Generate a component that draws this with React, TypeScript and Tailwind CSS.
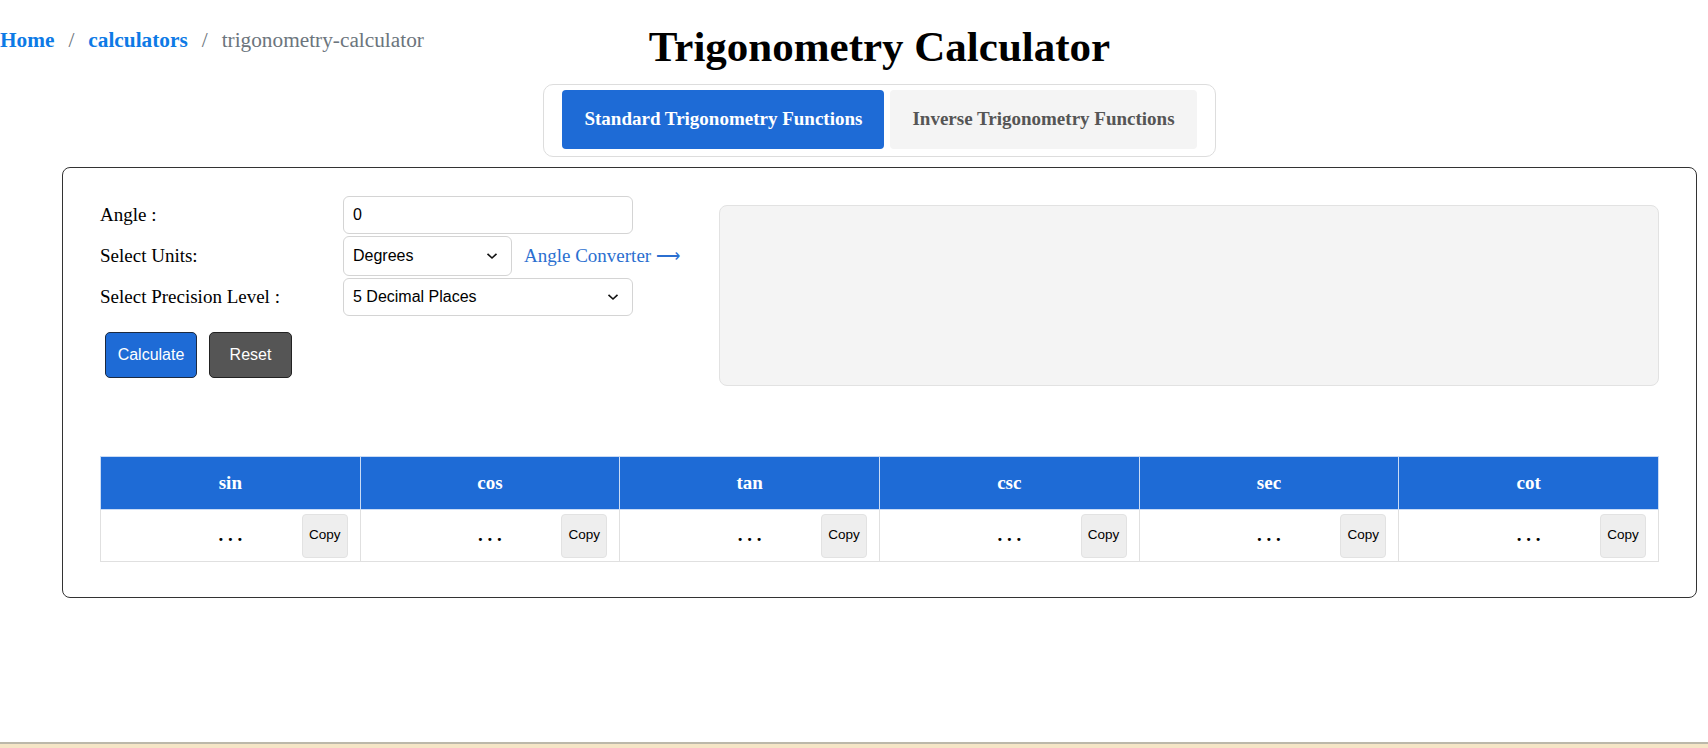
import { useState } from 'react';

const FUNCS = ['sin', 'cos', 'tan', 'csc', 'sec', 'cot'];

const serif = "font-['Liberation_Serif','Times_New_Roman',serif]";
const sans = "font-['Liberation_Sans',Arial,sans-serif]";

function Chevron() {
  return (
    <svg
      width="12"
      height="8"
      viewBox="0 0 12 8"
      className="pointer-events-none absolute top-1/2 right-[14px] -translate-y-1/2"
    >
      <path d="M1.5 1.8 L6 6 L10.5 1.8" fill="none" stroke="#111111" strokeWidth="1.6" />
    </svg>
  );
}

export default function App() {
  const [tab, setTab] = useState<'standard' | 'inverse'>('standard');
  const [angle, setAngle] = useState('0');

  return (
    <div className="bg-white text-black">
      <div className="min-h-[742px]">
        <div className="grid">
          <nav className={`col-start-1 row-start-1 pt-[28px] text-[21.3px] leading-[24px] ${serif}`}>
            <a href="#" className="font-bold text-[#0d7ae6]">Home</a>
            <span className="mx-[14px] text-[#6c757d]">/</span>
            <a href="#" className="font-bold text-[#0d7ae6]">calculators</a>
            <span className="mx-[14px] text-[#6c757d]">/</span>
            <span className="text-[#6c757d]">trigonometry-calculator</span>
          </nav>

          <div className="col-start-1 row-start-1 ml-[62px] mr-[11px] pt-[21px] flex flex-col items-center">
            <h1 className={`text-[43px] leading-[52px] font-bold ${serif}`}>Trigonometry Calculator</h1>
            <div className="mt-[11px] flex gap-[6px] rounded-[10px] border border-[#dddddd] px-[18px] pt-[5px] pb-[7px]">
              <button
                onClick={() => setTab('standard')}
                className={`h-[59px] rounded-[4px] px-[22px] text-[19px] font-bold ${serif} ${
                  tab === 'standard' ? 'bg-[#1e6bd6] text-white' : 'bg-[#f4f4f4] text-[#555555]'
                }`}
              >
                Standard Trigonometry Functions
              </button>
              <button
                onClick={() => setTab('inverse')}
                className={`h-[59px] rounded-[4px] px-[22px] text-[19px] font-bold ${serif} ${
                  tab === 'inverse' ? 'bg-[#1e6bd6] text-white' : 'bg-[#f4f4f4] text-[#555555]'
                }`}
              >
                Inverse Trigonometry Functions
              </button>
            </div>
          </div>
        </div>

        <div className="ml-[62px] mr-[11px] mt-[10px] rounded-[8px] border border-[#333333] px-[37px] pt-[28px] pb-[35px]">
          <div className="flex items-start">
            <div className={`w-[619px] shrink-0 text-[19px] ${serif}`}>
              <div className="flex h-[38px] items-center">
                <label className="w-[243px]">Angle :</label>
                <input
                  value={angle}
                  onChange={(e) => setAngle(e.target.value)}
                  className={`h-[38px] w-[290px] rounded-[6px] border border-[#d4d4d4] px-[9px] text-[16px] outline-none ${sans}`}
                />
              </div>
              <div className="mt-[2px] flex h-[40px] items-center">
                <label className="w-[243px]">Select Units:</label>
                <div className="relative">
                  <select
                    defaultValue="deg"
                    className={`h-[40px] w-[169px] appearance-none rounded-[6px] border border-[#d4d4d4] bg-white pl-[9px] pr-[30px] text-[16px] ${sans}`}
                  >
                    <option value="deg">Degrees</option>
                    <option value="rad">Radians</option>
                  </select>
                  <Chevron />
                </div>
                <a href="#" className="ml-[12px] text-[#2b6fd0]">
                  Angle Converter <span className="font-['DejaVu_Sans',sans-serif] text-[17px] font-light">⟶</span>
                </a>
              </div>
              <div className="mt-[2px] flex h-[38px] items-center">
                <label className="w-[243px]">Select Precision Level :</label>
                <div className="relative">
                  <select
                    defaultValue="5"
                    className={`h-[38px] w-[290px] appearance-none rounded-[6px] border border-[#d4d4d4] bg-white pl-[9px] pr-[30px] text-[16px] ${sans}`}
                  >
                    <option value="2">2 Decimal Places</option>
                    <option value="5">5 Decimal Places</option>
                    <option value="10">10 Decimal Places</option>
                  </select>
                  <Chevron />
                </div>
              </div>
              <div className={`mt-[16px] ml-[5px] flex gap-[12px] text-[16px] ${sans}`}>
                <button className="h-[46px] w-[92px] rounded-[5px] border border-[#1c2a40] bg-[#1e6bd6] text-white">
                  Calculate
                </button>
                <button
                  onClick={() => setAngle('0')}
                  className="h-[46px] w-[83px] rounded-[5px] border border-[#222222] bg-[#555555] text-white"
                >
                  Reset
                </button>
              </div>
            </div>
            <div className="mt-[9px] h-[181px] flex-1 rounded-[8px] border border-[#e2e2e2] bg-[#f4f4f4]" />
          </div>

          <table className="mt-[70px] w-full table-fixed border-collapse border border-[#dddddd]">
            <thead>
              <tr>
                {FUNCS.map((f) => (
                  <th
                    key={f}
                    className={`h-[53px] border border-[#c9dbf5] bg-[#1e6bd6] text-[19px] font-bold text-white ${serif}`}
                  >
                    {f}
                  </th>
                ))}
              </tr>
            </thead>
            <tbody>
              <tr>
                {FUNCS.map((f) => (
                  <td key={f} className="h-[52px] border border-[#e0e0e0] p-0">
                    <div className="grid grid-cols-[1fr_auto_1fr] items-center">
                      <span />
                      <span className={`text-[19px] font-bold ${serif}`}>. . .</span>
                      <button
                        className={`mr-[12px] h-[44px] w-[46px] justify-self-end rounded-[4px] border border-[#e2e2e2] bg-[#eeeeee] text-[13.5px] ${sans}`}
                      >
                        Copy
                      </button>
                    </div>
                  </td>
                ))}
              </tr>
            </tbody>
          </table>
        </div>
      </div>
      <footer className="h-[60px] border-t-2 border-[#bcb8aa] bg-[#f5e5c6]" />
    </div>
  );
}
